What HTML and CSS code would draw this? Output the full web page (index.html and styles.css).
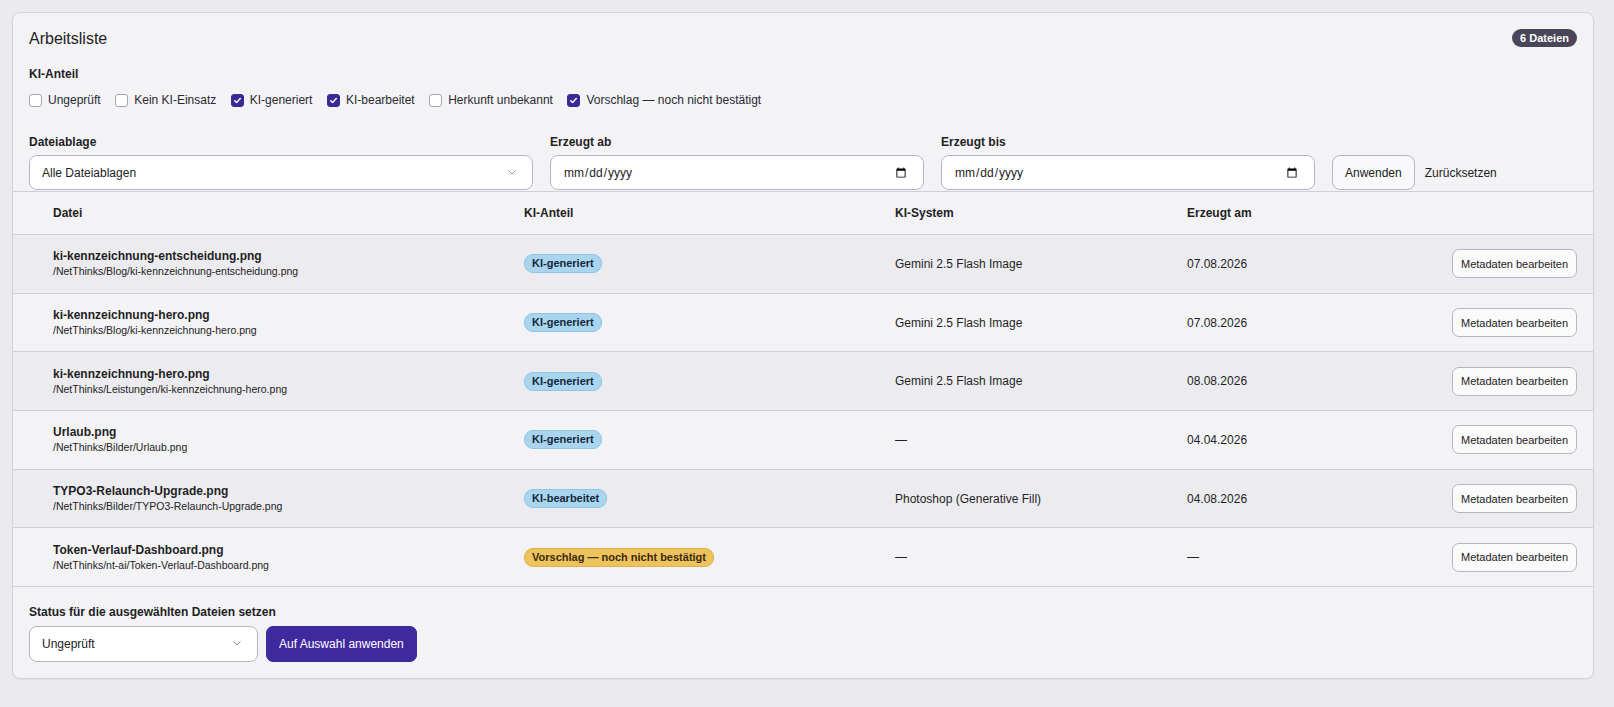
FILE: index.html
```html
<!DOCTYPE html>
<html lang="de">
<head>
<meta charset="utf-8">
<title>Arbeitsliste</title>
<link rel="stylesheet" href="styles.css">
</head>
<body>
<div class="card">
  <div class="pad top">
    <div class="head">
      <h1 class="title">Arbeitsliste</h1>
      <span class="count">6 Dateien</span>
    </div>
    <div class="group-label">KI-Anteil</div>
    <div class="checks">
      <label class="check"><span class="box"></span>Ungeprüft</label>
      <label class="check"><span class="box"></span>Kein KI-Einsatz</label>
      <label class="check"><span class="box on"><svg viewBox="0 0 13 13" width="13" height="13"><path d="M3.7 6.7 5.6 8.5 9.3 4.6" fill="none" stroke="#fff" stroke-width="1.5" stroke-linecap="round" stroke-linejoin="round"/></svg></span>KI-generiert</label>
      <label class="check"><span class="box on"><svg viewBox="0 0 13 13" width="13" height="13"><path d="M3.7 6.7 5.6 8.5 9.3 4.6" fill="none" stroke="#fff" stroke-width="1.5" stroke-linecap="round" stroke-linejoin="round"/></svg></span>KI-bearbeitet</label>
      <label class="check"><span class="box"></span>Herkunft unbekannt</label>
      <label class="check"><span class="box on"><svg viewBox="0 0 13 13" width="13" height="13"><path d="M3.7 6.7 5.6 8.5 9.3 4.6" fill="none" stroke="#fff" stroke-width="1.5" stroke-linecap="round" stroke-linejoin="round"/></svg></span>Vorschlag — noch nicht bestätigt</label>
    </div>
    <div class="filters">
      <div class="field f-store">
        <label class="field-label">Dateiablage</label>
        <div class="select-wrap">
          <select class="control select"><option>Alle Dateiablagen</option></select>
          <svg class="chev" viewBox="0 0 12 12" width="12" height="12"><path d="M2.5 4.5 6 8 9.5 4.5" fill="none" stroke="#8a8a94" stroke-width="1"/></svg>
        </div>
      </div>
      <div class="field f-date">
        <label class="field-label">Erzeugt ab</label>
        <input class="control date" type="date">
      </div>
      <div class="field f-date">
        <label class="field-label">Erzeugt bis</label>
        <input class="control date" type="date">
      </div>
      <div class="actions">
        <button class="btn">Anwenden</button>
        <button class="link">Zurücksetzen</button>
      </div>
    </div>
  </div>
  <table class="list">
    <colgroup>
      <col class="c1"><col class="c2"><col class="c3"><col class="c4"><col class="c5">
    </colgroup>
    <thead>
      <tr><th class="first">Datei</th><th>KI-Anteil</th><th>KI-System</th><th>Erzeugt am</th><th></th></tr>
    </thead>
    <tbody>
      <tr class="alt">
        <td class="first"><div class="fname">ki-kennzeichnung-entscheidung.png</div><div class="fpath">/NetThinks/Blog/ki-kennzeichnung-entscheidung.png</div></td>
        <td><span class="tag blue">KI-generiert</span></td>
        <td>Gemini 2.5 Flash Image</td>
        <td>07.08.2026</td>
        <td class="last"><button class="btn small">Metadaten bearbeiten</button></td>
      </tr>
      <tr>
        <td class="first"><div class="fname">ki-kennzeichnung-hero.png</div><div class="fpath">/NetThinks/Blog/ki-kennzeichnung-hero.png</div></td>
        <td><span class="tag blue">KI-generiert</span></td>
        <td>Gemini 2.5 Flash Image</td>
        <td>07.08.2026</td>
        <td class="last"><button class="btn small">Metadaten bearbeiten</button></td>
      </tr>
      <tr class="alt">
        <td class="first"><div class="fname">ki-kennzeichnung-hero.png</div><div class="fpath">/NetThinks/Leistungen/ki-kennzeichnung-hero.png</div></td>
        <td><span class="tag blue">KI-generiert</span></td>
        <td>Gemini 2.5 Flash Image</td>
        <td>08.08.2026</td>
        <td class="last"><button class="btn small">Metadaten bearbeiten</button></td>
      </tr>
      <tr>
        <td class="first"><div class="fname">Urlaub.png</div><div class="fpath">/NetThinks/Bilder/Urlaub.png</div></td>
        <td><span class="tag blue">KI-generiert</span></td>
        <td>—</td>
        <td>04.04.2026</td>
        <td class="last"><button class="btn small">Metadaten bearbeiten</button></td>
      </tr>
      <tr class="alt">
        <td class="first"><div class="fname">TYPO3-Relaunch-Upgrade.png</div><div class="fpath">/NetThinks/Bilder/TYPO3-Relaunch-Upgrade.png</div></td>
        <td><span class="tag blue">KI-bearbeitet</span></td>
        <td>Photoshop (Generative Fill)</td>
        <td>04.08.2026</td>
        <td class="last"><button class="btn small">Metadaten bearbeiten</button></td>
      </tr>
      <tr>
        <td class="first"><div class="fname">Token-Verlauf-Dashboard.png</div><div class="fpath">/NetThinks/nt-ai/Token-Verlauf-Dashboard.png</div></td>
        <td><span class="tag yellow">Vorschlag — noch nicht bestätigt</span></td>
        <td>—</td>
        <td>—</td>
        <td class="last"><button class="btn small">Metadaten bearbeiten</button></td>
      </tr>
    </tbody>
  </table>
  <div class="pad bottom">
    <div class="field-label">Status für die ausgewählten Dateien setzen</div>
    <div class="bulk">
      <div class="select-wrap bulk-select">
        <select class="control select"><option>Ungeprüft</option></select>
        <svg class="chev" viewBox="0 0 12 12" width="12" height="12"><path d="M2.5 4.5 6 8 9.5 4.5" fill="none" stroke="#8a8a94" stroke-width="1"/></svg>
      </div>
      <button class="btn primary">Auf Auswahl anwenden</button>
    </div>
  </div>
</div>
</body>
</html>
```

FILE: styles.css
```css
* { box-sizing: border-box; }
html, body { margin: 0; padding: 0; }
body {
  background: #ebebee;
  font-family: "Liberation Sans", Arial, sans-serif;
  font-size: 12px;
  color: #1f1f24;
  padding: 12px;
}
.card {
  width: 1582px;
  background: #f3f3f6;
  border: 1px solid #d3d3d8;
  border-radius: 8px;
  overflow: hidden;
  box-shadow: 0 1px 2px rgba(0,0,0,0.06);
}
.pad { padding: 0 16px; }
.top { padding-top: 14px; }
.head {
  display: flex;
  justify-content: space-between;
  align-items: center;
  height: 24px;
}
.title {
  margin: 0;
  font-size: 16px;
  font-weight: 400;
  color: #222;
}
.count {
  background: #4a4659;
  color: #fff;
  font-weight: 700;
  font-size: 11px;
  line-height: 18px;
  height: 18px;
  padding: 0 8px;
  border-radius: 9px;
  margin-top: -2px;
}
.group-label {
  margin-top: 16px;
  font-weight: 700;
  line-height: 14px;
}
.checks {
  display: flex;
  gap: 14.5px;
  margin-top: 11px;
  height: 16px;
  align-items: center;
}
.check {
  display: flex;
  align-items: center;
  gap: 6px;
  color: #2a2a30;
}
.box {
  width: 13px;
  height: 13px;
  border: 1px solid #a4a4ae;
  border-radius: 3px;
  background: #fff;
  display: inline-flex;
}
.box.on {
  background: #3b2a94;
  border-color: #3b2a94;
}
.box svg { margin: -1px; }
.filters {
  display: flex;
  align-items: flex-end;
  gap: 17px;
  margin-top: 27px;
}
.field { display: flex; flex-direction: column; }
.f-store { width: 504px; }
.f-date { width: 374px; }
.field-label {
  font-weight: 700;
  line-height: 14px;
  margin-bottom: 6px;
  color: #1f1f24;
}
.control {
  height: 35px;
  border: 1px solid #b7b6c0;
  border-radius: 8px;
  background: #fff;
  font-family: inherit;
  font-size: 12px;
  color: #222;
  padding: 0 12px;
  width: 100%;
}
.select-wrap { position: relative; }
.select { appearance: none; -webkit-appearance: none; }
.chev {
  position: absolute;
  right: 15px;
  top: 11px;
  pointer-events: none;
}
.date { padding-right: 14px; }
.actions { display: flex; align-items: center; gap: 2px; }
.btn {
  font-family: inherit;
  font-size: 12px;
  color: #222;
  background: #f8f8fa;
  border: 1px solid #b7b6c0;
  border-radius: 8px;
  height: 35px;
  padding: 0 12px;
}
.link {
  font-family: inherit;
  font-size: 12px;
  color: #222;
  background: none;
  border: 0;
  padding: 0 8px;
  height: 35px;
}
.list {
  width: 100%;
  border-collapse: collapse;
  table-layout: fixed;
  margin-top: 1px;
  border-top: 1px solid #cfcfd5;
}
.c1 { width: 511px; }
.c2 { width: 371px; }
.c3 { width: 292px; }
.c4 { width: 200px; }
th {
  text-align: left;
  font-weight: 700;
  height: 43px;
  padding: 0;
  border-bottom: 1px solid #cfcfd5;
}
td {
  height: 58.7px;
  padding: 0;
  border-bottom: 1px solid #cfcfd5;
  vertical-align: middle;
}
.first { padding-left: 40px; }
.last { text-align: right; padding-right: 16px; }
tr.alt td { background: #ececf0; }
.fname { font-weight: 700; line-height: 16px; }
.fpath { font-size: 10.5px; line-height: 15px; color: #222; }
.tag {
  display: inline-block;
  font-weight: 700;
  font-size: 11px;
  line-height: 17px;
  padding: 0 7px;
  border-radius: 9px;
  border: 1px solid;
}
.tag.blue { background: #a9d5ef; border-color: #8ec4e6; color: #13283a; }
.tag.yellow { background: #ecc35c; border-color: #ddb24a; color: #3a2a0e; }
.btn.small {
  height: 29px;
  font-size: 11px;
  padding: 0 8px;
  border-radius: 7px;
  background: #fafafb;
}
.bottom { padding-top: 18px; padding-bottom: 16px; }
.bottom .field-label { margin-bottom: 7px; }
.bulk { display: flex; gap: 8px; }
.bulk-select { width: 229px; }
.bulk .control { height: 36px; }
.btn.primary {
  background: #3f299f;
  border-color: #3f299f;
  color: #fff;
  height: 36px;
  padding: 0 12px;
  border-radius: 7px;
}
```
